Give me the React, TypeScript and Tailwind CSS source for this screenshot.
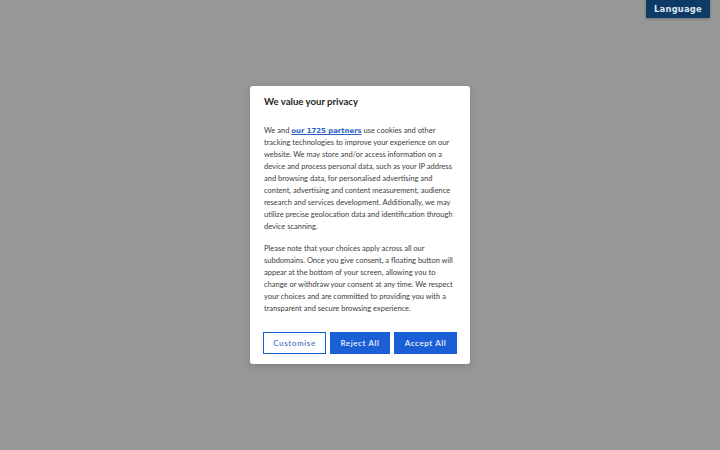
import React from "react";

const body = "font-['Lato','Noto_Sans',sans-serif]";

const ConsentModal = () => {
	return (
		<div className="w-[220px] rounded-[3px] bg-white px-[14px] pt-[9px] pb-[10px] shadow-[0_2px_8px_rgba(0,0,0,0.15)]">
			<h2 className={`${body} text-[9.6px] leading-[14px] font-bold text-[#262626]`}>We value your privacy</h2>
			<div className={`${body} mt-[16px] text-[7.5px] leading-[12px] text-[#3d3d3d]`}>
				<p>
					We and{" "}
					<a href="#" className="font-['DejaVu_Sans',sans-serif] text-[6.9px] font-bold text-[#2a62c4] underline">
						our 1725 partners
					</a>{" "}
					use cookies and other tracking technologies to improve your experience on our website. We may store
					and/or access information on a device and process personal data, such as your IP address and browsing
					data, for personalised advertising and content, advertising and content measurement, audience research
					and services development. Additionally, we may utilize precise geolocation data and identification
					through device scanning.
				</p>
				<p className="mt-[10px]">
					Please note that your choices apply across all our subdomains. Once you give consent, a floating button
					will appear at the bottom of your screen, allowing you to change or withdraw your consent at any time. We
					respect your choices and are committed to providing you with a transparent and secure browsing
					experience.
				</p>
			</div>
			<div className="mt-[17px] -mx-[1px] flex gap-[4px] font-['Lato',sans-serif] text-[8px] font-semibold tracking-[0.6px]">
				<button className="h-[22px] w-[63px] border border-[#1a5fd6] bg-white text-[#5577c0]">Customise</button>
				<button className="h-[22px] w-[60px] bg-[#1a5fd6] text-[#f2f5fb]">Reject All</button>
				<button className="h-[22px] w-[63px] bg-[#1a5fd6] text-[#f2f5fb]">Accept All</button>
			</div>
		</div>
	);
};

const App = () => {
	return (
		<div className="relative h-[450px] w-[720px] overflow-hidden bg-[#979797]">
			{/* page header dimmed behind the overlay */}
			<div className="flex gap-[28px] px-[70px] pt-[22px] font-['Liberation_Sans',sans-serif] text-[15px] text-[#9a9a9a]">
				<span>Home</span>
				<span>Products</span>
				<span>Solutions</span>
				<span>Resources</span>
				<span>Company</span>
				<span>Contact</span>
			</div>

			<button className="absolute right-[10px] top-0 h-[18px] w-[64px] bg-[#0d3b66] font-['DejaVu_Sans',sans-serif] text-[8.4px] font-bold tracking-[0.2px] text-[#dfe5ec] shadow-[0_1px_3px_rgba(0,0,0,0.25)]">
				Language
			</button>

			<div className="absolute inset-0 flex items-center justify-center">
				<ConsentModal />
			</div>
		</div>
	);
};

export default App;
